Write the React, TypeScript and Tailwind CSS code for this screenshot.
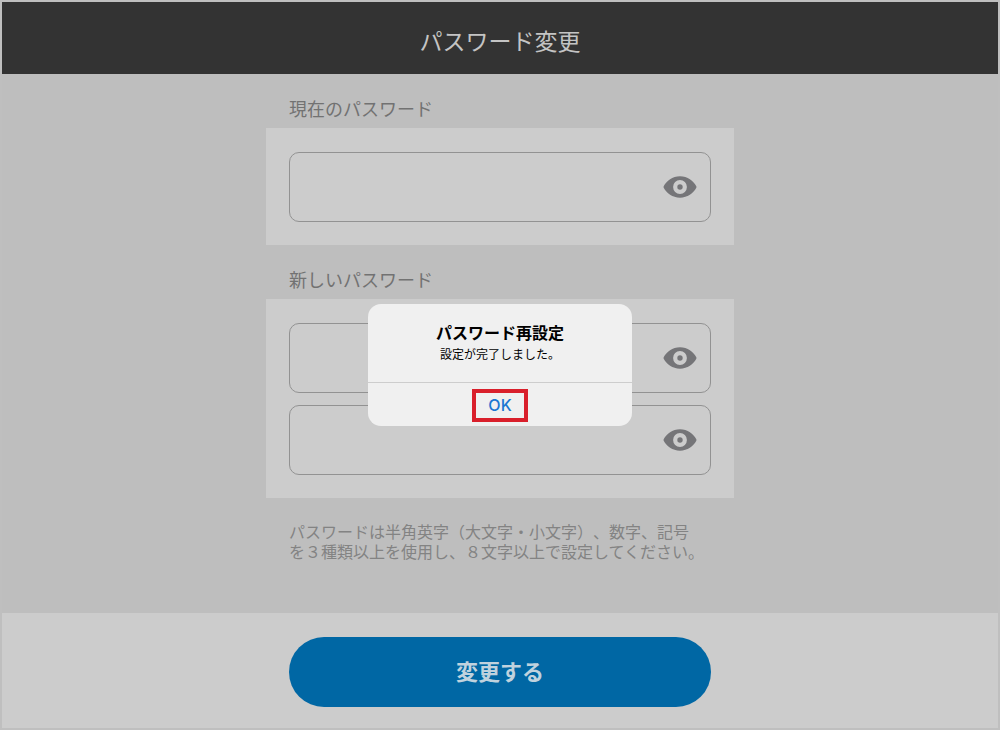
import { useState } from "react";

function EyeIcon() {
  return (
    <svg viewBox="0 0 34 22" className="h-[22px] w-[34px]" aria-hidden="true">
      <path
        fill="#757578"
        fillRule="evenodd"
        d="M17 0.3C24.5 0.3 30.5 5 33.3 10.2Q33.7 11 33.3 11.8C30.5 17 24.5 21.7 17 21.7S3.5 17 0.7 11.8Q0.3 11 0.7 10.2C3.5 5 9.5 0.3 17 0.3ZM17 4.1A6.9 6.9 0 1 0 17 17.9A6.9 6.9 0 1 0 17 4.1Z"
      />
      <circle cx="17" cy="11" r="2.7" fill="#757578" />
    </svg>
  );
}

function PasswordField({ id, label }: { id: string; label: string }) {
  const [visible, setVisible] = useState(false);
  return (
    <div className="relative">
      <input
        id={id}
        type={visible ? "text" : "password"}
        aria-label={label}
        className="block h-[70px] w-full rounded-[10px] border border-[#929292] bg-transparent pr-16 pl-4 text-lg text-[#444] outline-none"
      />
      <button
        type="button"
        aria-label="パスワードを表示"
        onClick={() => setVisible(!visible)}
        className="absolute inset-y-0 right-[14px] flex items-center"
      >
        <EyeIcon />
      </button>
    </div>
  );
}

export default function App() {
  const [open, setOpen] = useState(true);
  return (
    <div className="flex min-h-screen flex-col border-2 border-[#bfbfbf] bg-[#bebebe] font-['Noto_Sans_CJK_JP',sans-serif]">
      <header className="flex h-[72px] items-center justify-center bg-[#333] pt-1">
        <h1 className="text-[23px] leading-8 font-normal text-[#c4c4c4]">パスワード変更</h1>
      </header>

      <main className="mx-auto w-full max-w-[468px] flex-1 pb-12">
        <label htmlFor="current" className="block px-[23px] pt-[23px] pb-[9px] text-lg leading-[22px] text-[#727272]">
          現在のパスワード
        </label>
        <div className="bg-[#cccccc] px-[23px] pt-6 pb-[23px]">
          <PasswordField id="current" label="現在のパスワード" />
        </div>
        <label htmlFor="next" className="block px-[23px] pt-[23px] pb-[9px] text-lg leading-[22px] text-[#727272]">
          新しいパスワード
        </label>
        <div className="flex flex-col gap-3 bg-[#cccccc] px-[23px] pt-6 pb-[23px]">
          <PasswordField id="next" label="新しいパスワード" />
          <PasswordField id="confirm" label="新しいパスワード（確認）" />
        </div>
        <p className="pt-[23px] pl-[23px] text-base leading-5 whitespace-nowrap text-[#838383] [text-spacing-trim:space-all]">
          パスワードは半角英字（大文字・小文字）、数字、記号
          <br />
          を３種類以上を使用し、８文字以上で設定してください。
        </p>
      </main>

      <footer className="bg-[#cccccc] px-6 pt-6 pb-[21px]">
        <button
          type="button"
          className="mx-auto block h-[70px] w-full max-w-[422px] rounded-full bg-[#0067a4] pb-1 text-[22px] font-bold text-[#bfd2de]"
        >
          変更する
        </button>
      </footer>

      {open && (
        <div className="fixed inset-0 flex items-center justify-center">
          <div
            role="alertdialog"
            aria-labelledby="dialog-title"
            aria-describedby="dialog-text"
            className="w-[264px] rounded-[13px] bg-[#f0f0f0] text-center text-black"
          >
            <div className="border-b border-[#cdcdcd] pt-4 pb-[18px]">
              <h2 id="dialog-title" className="text-base leading-6 font-bold">
                パスワード再設定
              </h2>
              <p id="dialog-text" className="text-xs leading-5">
                設定が完了しました。
              </p>
            </div>
            <div className="flex justify-center pt-[6px] pb-1">
              <button
                type="button"
                onClick={() => setOpen(false)}
                className="h-[33px] w-14 border-4 border-[#d91f2b] pb-[2px] font-['Inter',sans-serif] text-base leading-5 font-medium text-[#1b77d2]"
              >
                OK
              </button>
            </div>
          </div>
        </div>
      )}
    </div>
  );
}
